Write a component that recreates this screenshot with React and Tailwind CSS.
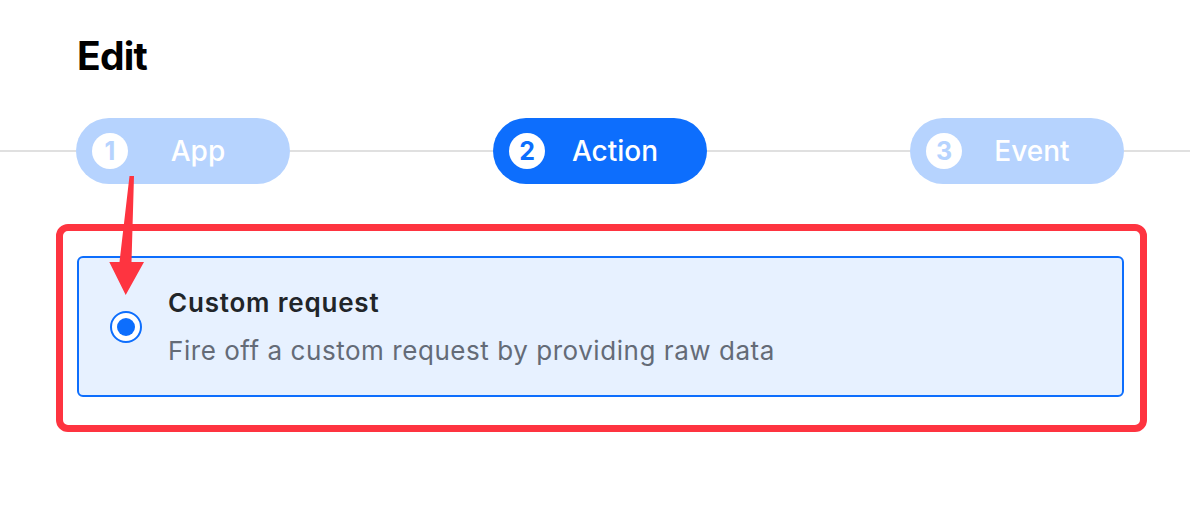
import React from 'react'

const steps = [
  { n: 1, label: 'App', active: false },
  { n: 2, label: 'Action', active: true },
  { n: 3, label: 'Event', active: false },
]

function StepPill({ n, label, active }) {
  return (
    <div
      className={[
        'flex h-[66px] w-[214px] shrink-0 items-center rounded-full pl-[16px] pr-[22px]',
        active ? 'bg-[#0d6efd]' : 'bg-[#b6d3fe]',
      ].join(' ')}
    >
      <span
        className={[
          'flex size-[36px] shrink-0 items-center justify-center rounded-full bg-white text-[25px] font-bold leading-none',
          active ? 'text-[#0d6efd]' : 'text-[#b6d3fe]',
        ].join(' ')}
      >
        {n}
      </span>
      <span className="flex-1 text-center text-[28px] font-medium leading-none text-white">{label}</span>
    </div>
  )
}

export default function App() {
  return (
    <div className="relative h-[510px] w-[1190px] overflow-hidden bg-white font-['Inter',sans-serif]">
      <h1 className="pl-[77px] pt-[36px] text-[39px] font-bold leading-[40px] tracking-[-0.8px] text-black">Edit</h1>

      <div className="mt-[42px] flex h-[66px] items-center">
        <div className="h-[2px] w-[76px] bg-[#e0e0e0]" />
        <StepPill {...steps[0]} />
        <div className="h-[2px] flex-1 bg-[#e0e0e0]" />
        <StepPill {...steps[1]} />
        <div className="h-[2px] flex-1 bg-[#e0e0e0]" />
        <StepPill {...steps[2]} />
        <div className="h-[2px] w-[66px] bg-[#e0e0e0]" />
      </div>

      <div className="ml-[56px] mt-[40px] h-[208px] w-[1091px] rounded-[12px] border-[7px] border-[#fe3440] pl-[14px] pt-[25px]">
        <div className="flex h-[141px] w-[1047px] items-center rounded-[6px] border-2 border-[#0d6efd] bg-[#e7f1ff] pl-[31px]">
          <span className="flex size-[32px] shrink-0 items-center justify-center rounded-full border-2 border-[#0d6efd] bg-white">
            <span className="size-[18px] rounded-full bg-[#0d6efd]" />
          </span>
          <div className="ml-[26px] flex flex-col">
            <p className="text-[26px] font-semibold leading-[32px] tracking-[0.8px] text-[#212529]">Custom request</p>
            <p className="mt-[16px] text-[26px] leading-[32px] tracking-[0.55px] text-[#646b77]">
              Fire off a custom request by providing raw data
            </p>
          </div>
        </div>
      </div>

      {/* annotation arrow */}
      <svg className="pointer-events-none absolute left-0 top-0" width="1190" height="510" aria-hidden>
        <polygon
          points="129.5,176 134,176 131.5,262 144,262 125.7,295 109.3,262 119.5,262"
          fill="#fe3440"
        />
      </svg>
    </div>
  )
}
